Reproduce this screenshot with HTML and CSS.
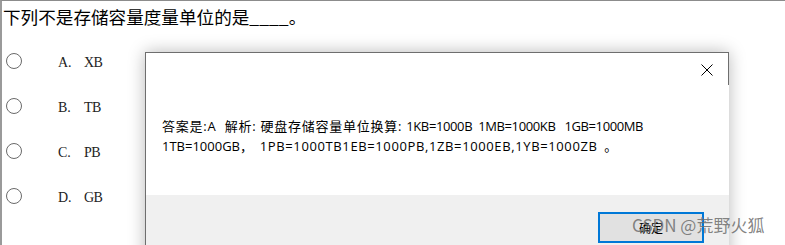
FILE: index.html
```html
<!DOCTYPE html>
<html lang="zh">
<head>
<meta charset="utf-8">
<title>题目</title>
<link rel="stylesheet" href="styles.css">
</head>
<body>
<div class="page">
  <div class="question">下列不是存储容量度量单位的是<span class="blank">____</span>。</div>
  <ul class="options">
    <li class="option"><span class="radio"></span><span class="label"><span class="key">A.</span><span class="val">XB</span></span></li>
    <li class="option"><span class="radio"></span><span class="label"><span class="key">B.</span><span class="val">TB</span></span></li>
    <li class="option"><span class="radio"></span><span class="label"><span class="key">C.</span><span class="val">PB</span></span></li>
    <li class="option"><span class="radio"></span><span class="label"><span class="key">D.</span><span class="val">GB</span></span></li>
  </ul>
</div>

<div class="dialog">
  <div class="titlebar">
    <span class="close">
      <svg width="12" height="12" viewBox="0 0 12 12"><path d="M0.5 0.5 L11.5 11.5 M11.5 0.5 L0.5 11.5" stroke="#000" stroke-width="1" fill="none"/></svg>
    </span>
  </div>
  <div class="message">
    <p><span class="wide">答案是:A&nbsp;&nbsp;解析: 硬盘存储容量单位换算: </span><span class="tight">1KB=1000B&nbsp;&nbsp;1MB=1000KB&nbsp;&nbsp;&nbsp;1GB=1000MB</span></p>
    <p>1TB=1000GB，&nbsp;&nbsp;<span class="loose">1PB=1000TB1EB=1000PB,1ZB=1000EB,1YB=1000ZB</span>&nbsp;&nbsp;。</p>
  </div>
  <div class="footer">
    <button class="ok">确定</button>
  </div>
</div>

<div class="watermark">CSDN @荒野火狐</div>
</body>
</html>
```
FILE: styles.css
```css
html, body {
  margin: 0;
  padding: 0;
  background: #fff;
}
body {
  width: 785px;
  height: 245px;
  overflow: hidden;
  position: relative;
  font-family: "Noto Sans CJK SC", sans-serif;
}
.page {
  height: 245px;
  box-sizing: border-box;
  border-top: 1px solid #8c8c8c;
  border-left: 2px solid #9a9a9a;
  padding-left: 1px;
}
.question {
  font-family: "Noto Sans CJK SC", sans-serif;
  font-size: 17.6px;
  line-height: 24px;
  padding-top: 4px;
  color: #000;
}
.options {
  list-style: none;
  margin: 0;
  padding: 0;
  padding-top: 24px;
}
.option {
  display: flex;
  align-items: flex-start;
  height: 45px;
}
.radio {
  width: 14px;
  height: 14px;
  border: 1.3px solid #6a6a6a;
  border-radius: 50%;
  margin-left: 3px;
  flex: none;
}
.label {
  display: flex;
  margin-left: 36px;
  margin-top: 1px;
  font-family: "Liberation Serif", "DejaVu Serif", serif;
  font-size: 14px;
  line-height: 18px;
  color: #222;
  white-space: pre;
}
.key {
  width: 26px;
}
.val {
  letter-spacing: -0.5px;
}
.dialog {
  position: absolute;
  left: 145px;
  top: 52px;
  width: 584px;
  height: 210px;
  box-sizing: border-box;
  background: #fff;
  border-top: 1px solid #6e6e6e;
  border-left: 1px solid #6e6e6e;
  box-shadow: 0 0 16px rgba(0, 0, 0, 0.28);
  display: flex;
  flex-direction: column;
}
.dialog::after {
  content: "";
  position: absolute;
  top: -1px;
  right: 0;
  width: 1px;
  height: 33px;
  background: #6e6e6e;
}
.titlebar {
  height: 34px;
  display: flex;
  justify-content: flex-end;
  align-items: center;
  padding-right: 16px;
}
.close {
  width: 12px;
  height: 12px;
  display: block;
}
.close svg {
  display: block;
}
.message {
  height: 108px;
  box-sizing: border-box;
  padding: 29px 0 0 16px;
  font-family: "Open Sans", "Noto Sans CJK SC", sans-serif;
  font-size: 13px;
  line-height: 20px;
  color: #000;
}
.message p {
  margin: 0;
  white-space: nowrap;
}
.wide {
  letter-spacing: 0.75px;
}
.tight {
  letter-spacing: -0.38px;
}
.loose {
  letter-spacing: 0.62px;
}
.footer {
  flex: 1;
  background: #f0f0f0;
  display: flex;
  justify-content: flex-end;
  align-items: flex-start;
  padding: 17px 25px 0 0;
}
.ok {
  width: 106px;
  height: 31px;
  box-sizing: border-box;
  border: 2px solid #0078d7;
  background: #e1e1e1;
  font-family: "Noto Sans CJK SC", sans-serif;
  font-size: 12px;
  color: #000;
  padding: 0;
}
.watermark {
  position: absolute;
  left: 632px;
  top: 213px;
  font-family: "Noto Sans CJK SC", sans-serif;
  font-size: 17px;
  line-height: 24px;
  color: rgba(110, 110, 110, 0.85);
  white-space: nowrap;
}
```
